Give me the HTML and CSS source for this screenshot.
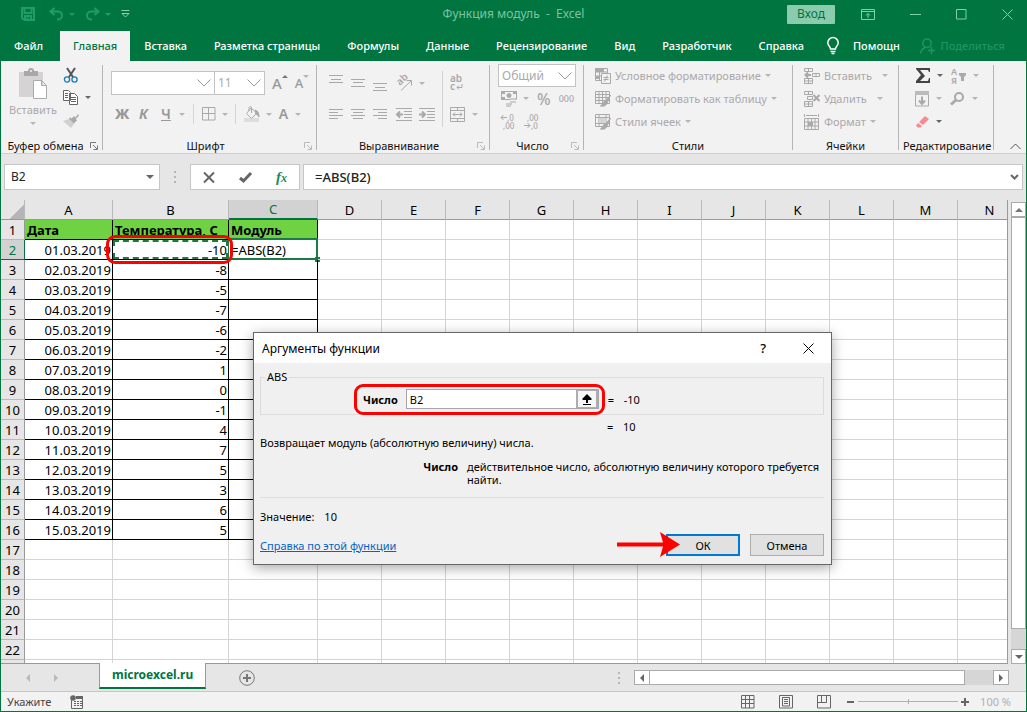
FILE: index.html
```html
<!DOCTYPE html>
<html lang="ru">
<head>
<meta charset="utf-8">
<title>Функция модуль - Excel</title>
<link rel="stylesheet" href="styles.css">
</head>
<body>
<div class="app">
  <header class="titlebar">
    <div class="quick">
      <button class="qbtn save" aria-label="Сохранить"><svg width="14" height="14" viewBox="0 0 14 14"><path d="M1 1h12v12H3.500L1 11zM3.500 1v5h7V1M4 13V9h6v4M6.500 10.500v2.500" /></svg></button>
      <button class="qbtn" aria-label="Отменить"><svg width="15" height="14" viewBox="0 0 15 14"><path d="M5.500 1L1.500 4.500l4 3.500M2 4.500h7a4 4 0 0 1 0 8H8"/></svg><i class="dd"></i></button>
      <button class="qbtn" aria-label="Вернуть"><svg width="15" height="14" viewBox="0 0 15 14"><path d="M9.500 1l4 3.500-4 3.500M13 4.500H6a4 4 0 0 0 0 8h1"/></svg><i class="dd"></i></button>
      <button class="qbtn more" aria-label="Настройка панели"><svg width="9" height="8" viewBox="0 0 9 8"><path d="M.5.5h8M1 3.500h7L4.500 7z"/></svg></button>
    </div>
    <div class="doc-title">Функция модуль &nbsp;- &nbsp;Excel</div>
    <div class="window-controls">
      <button class="login">Вход</button>
      <button class="wbtn" aria-label="Параметры ленты"><svg width="14" height="11" viewBox="0 0 14 11"><path d="M.5.5h13v10H.5zM.5 2.500h13M7 9V4.500M5 6.500l2-2 2 2"/></svg></button>
      <button class="wbtn" aria-label="Свернуть"><svg width="11" height="11" viewBox="0 0 11 11"><path d="M0 5.500h11"/></svg></button>
      <button class="wbtn" aria-label="Развернуть"><svg width="11" height="11" viewBox="0 0 11 11"><path d="M.5.5h9.500v9.500H.5z"/></svg></button>
      <button class="wbtn" aria-label="Закрыть"><svg width="11" height="11" viewBox="0 0 11 11"><path d="M.5.5l10 10M10.500.5l-10 10"/></svg></button>
    </div>
  </header>

  <nav class="tabs">
    <button class="tab file">Файл</button>
    <button class="tab active">Главная</button>
    <button class="tab">Вставка</button>
    <button class="tab">Разметка страницы</button>
    <button class="tab">Формулы</button>
    <button class="tab">Данные</button>
    <button class="tab">Рецензирование</button>
    <button class="tab">Вид</button>
    <button class="tab">Разработчик</button>
    <button class="tab">Справка</button>
    <button class="tab tell"><svg width="12" height="18" viewBox="0 0 12 18"><path d="M3.500 12c0-2.500-2.700-3-2.700-6.200a5.200 5.200 0 0 1 10.400 0C11.200 9 8.500 9.500 8.500 12zM3.500 14.500h5M4.500 16.500h3"/></svg>Помощн</button>
    <button class="tab share"><svg width="15" height="16" viewBox="0 0 15 16"><path d="M.7 15.500c0-3.500 2-5 4.500-6M7 1a4.200 4.200 0 1 1 0 8.400A4.200 4.200 0 0 1 7 1zM8 12.500h7M11.500 9v7"/></svg>Поделиться</button>
  </nav>

  <section class="ribbon">
    <div class="group clipboard">
      <div class="body">
        <button class="paste">
          <svg width="28" height="31" viewBox="0 0 28 31"><path fill="#d5d3d4" d="M0 4h24v25H0z"/><path fill="#a9a7a8" d="M5 3h4a3 3 0 0 1 6 0h4v5H5z"/><circle cx="12" cy="3" r="1" fill="#f3f2f3"/><path fill="#fff" stroke="#aaa" d="M14.500 12.500h8l5 5v13h-13zM22.500 12.500v5h5"/></svg>
          <span>Вставить</span><i class="dd"></i>
        </button>
        <div class="stack">
          <button class="ib" aria-label="Вырезать"><svg width="16" height="16" viewBox="0 0 16 16"><path stroke="#555" stroke-width="2" d="M4 1l6 9M12 1L6 10"/><circle cx="4" cy="12.500" r="2.600" stroke="#1b79b8" stroke-width="1.300"/><circle cx="11.500" cy="12.500" r="2.600" stroke="#1b79b8" stroke-width="1.300"/></svg></button>
          <button class="ib" aria-label="Копировать"><svg width="16" height="15" viewBox="0 0 16 15"><path fill="#fff" stroke="#666" d="M.5.5h5l2 2v8h-7zM6.500 3.500h5l3 3v8h-8z"/><path stroke="#1b79b8" d="M2 3.500h3M2 5.500h3M2 7.500h3M8 7.500h5M8 9.500h5M8 11.500h5"/></svg><i class="dd dark"></i></button>
          <button class="ib" aria-label="Формат по образцу"><svg width="16" height="15" viewBox="0 0 16 15"><path fill="#aaa" stroke="none" d="M8 6l3-3 1.500 1.500L15 1l1 1.500-3 3.500 1 1.500-2.500 2z"/><path fill="#d0d0d0" stroke="none" d="M0 8l6-2 5 5-3 4z"/><path stroke="#aaa" stroke-width="2" d="M6.500 5l5 5"/></svg></button>
        </div>
      </div>
      <div class="caption"><span>Буфер обмена</span><svg class="launch dark" width="8" height="8" viewBox="0 0 8 8"><path d="M.5 6V.5H6M3 3l4 4M7.500 3.500v4h-4"/></svg></div>
    </div>

    <div class="group font">
      <div class="body rows">
        <div class="row top">
          <label class="combo family"><select aria-label="Шрифт"><option></option></select><svg width="14" height="8" viewBox="0 0 14 8"><path d="M.5.5L7 7 13.500.5"/></svg></label>
          <label class="combo size"><select aria-label="Размер"><option>11</option></select><svg width="14" height="8" viewBox="0 0 14 8"><path d="M.5.5L7 7 13.500.5"/></svg></label>
          <button class="ib grow">A<i class="up"></i></button>
          <button class="ib shrink">A<i class="dd"></i></button>
        </div>
        <div class="row bottom">
          <button class="ib letter bold">Ж</button>
          <button class="ib letter ital">К</button>
          <button class="ib letter under"><u>Ч</u><i class="dd"></i></button>
          <i class="vline"></i>
          <button class="ib" aria-label="Границы"><svg width="14" height="14" viewBox="0 0 14 14"><path d="M.5.5h12.500v12.500H.5zM6.500.5V13M.5 6.500H13"/></svg><i class="dd"></i></button>
          <i class="vline"></i>
          <button class="ib" aria-label="Цвет заливки"><svg width="16" height="16" viewBox="0 0 16 16"><path fill="#dedddd" stroke="none" d="M0 12h15v4H0z"/><path fill="#f3f2f3" d="M7 2l6 5-5.500 5.500-5-5z"/><path d="M5 5V1.500c0-1 2.500-1 2.500 0V7"/><path fill="#aaa" d="M11 4c3 1 4 3 4 7-1-2-2-2-3-3z"/></svg><i class="dd"></i></button>
          <button class="ib letter color">А<i class="dd"></i></button>
        </div>
      </div>
      <div class="caption"><span>Шрифт</span><svg class="launch" width="8" height="8" viewBox="0 0 8 8"><path d="M.5 6V.5H6M3 3l4 4M7.500 3.500v4h-4"/></svg></div>
    </div>

    <div class="group align">
      <div class="body">
        <div class="rows">
          <div class="row top">
            <button class="ib" aria-label="По верхнему краю"><svg width="15" height="16" viewBox="0 0 15 16"><path d="M0 .5h14M2 4.500h10M0 7.500h14"/></svg></button>
            <button class="ib" aria-label="По середине"><svg width="15" height="16" viewBox="0 0 15 16"><path d="M0 4.500h14M2 7.500h10M0 11.500h14"/></svg></button>
            <button class="ib" aria-label="По нижнему краю"><svg width="15" height="16" viewBox="0 0 15 16"><path d="M0 8.500h14M2 12.500h10M0 15.500h14"/></svg></button>
            <button class="ib wide" aria-label="Ориентация"><svg width="17" height="16" viewBox="0 0 17 16"><text x="0" y="0" transform="translate(4 11) rotate(-45)">ab</text><path d="M5 15.500L15 6M10.500 5.500H15.500v5"/></svg><i class="dd"></i></button>
          </div>
          <div class="row bottom">
            <button class="ib" aria-label="По левому краю"><svg width="15" height="10" viewBox="0 0 15 10"><path d="M0 .5h14M0 3.500h9M0 6.500h14M0 9.500h9"/></svg></button>
            <button class="ib" aria-label="По центру"><svg width="15" height="10" viewBox="0 0 15 10"><path d="M0 .5h14M2 3.500h10M0 6.500h14M2 9.500h10"/></svg></button>
            <button class="ib" aria-label="По правому краю"><svg width="15" height="10" viewBox="0 0 15 10"><path d="M0 .5h14M5 3.500h9M0 6.500h14M5 9.500h9"/></svg></button>
            <button class="ib wide" aria-label="Уменьшить отступ"><svg width="16" height="13" viewBox="0 0 16 13"><path d="M0 .5h16M8 3.500h8M8 6.500h8M8 9.500h8M0 12.500h16"/><path class="thick" d="M1 6.500h6M4 3.500l-3 3 3 3"/></svg></button>
            <button class="ib" aria-label="Увеличить отступ"><svg width="16" height="13" viewBox="0 0 16 13"><path d="M0 .5h16M8 3.500h8M8 6.500h8M8 9.500h8M0 12.500h16"/><path class="thick" d="M0 6.500h6M3 3.500l3 3-3 3"/></svg></button>
          </div>
        </div>
        <i class="vline tall"></i>
        <div class="rows">
          <div class="row top"><button class="ib" aria-label="Перенести текст"><svg width="14" height="18" viewBox="0 0 14 18"><text x="0" y="8">ab</text><text x="0" y="16">c</text><path d="M12 10v3.500H7M9 11.500l-2 2 2 2"/></svg></button></div>
          <div class="row bottom"><button class="ib merge" aria-label="Объединить"><svg width="15" height="15" viewBox="0 0 15 15"><path d="M.5.5h14v14H.5zM.5 3.500h14M.5 11.500h14M7.500.5v3M7.500 11.500v3M3 7.500h9M5 5.500l-2 2 2 2M10 5.500l2 2-2 2"/></svg><i class="dd"></i></button></div>
        </div>
      </div>
      <div class="caption"><span>Выравнивание</span><svg class="launch" width="8" height="8" viewBox="0 0 8 8"><path d="M.5 6V.5H6M3 3l4 4M7.500 3.500v4h-4"/></svg></div>
    </div>

    <div class="group number">
      <div class="body stackrows">
        <label class="combo format"><select aria-label="Числовой формат"><option>Общий</option></select><svg width="14" height="8" viewBox="0 0 14 8"><path d="M.5.5L7 7 13.500.5"/></svg></label>
        <div class="row">
          <button class="ib money" aria-label="Денежный формат"><svg width="16" height="16" viewBox="0 0 16 16"><path d="M.5.5h15v8H.5z"/><path fill="#aaa" stroke="none" d="M0 0h4v3H0zM12 0h4v3h-4zM0 6h4v3H0z"/><circle cx="8" cy="4.500" r="2" fill="#aaa"/><path stroke="#ccc" stroke-width="2" d="M9 8h6M9 11h6M5 13h6M5 15h5"/></svg><i class="dd"></i></button>
          <button class="ib pct">%</button>
          <button class="ib zeros">000</button>
        </div>
        <div class="row dec">
          <button class="ib" aria-label="Увеличить разрядность"><svg width="15" height="16" viewBox="0 0 15 16"><text class="num" x="6" y="7">,0</text><text class="num" x="2" y="15">,00</text><path d="M0 3.500h6M2.500 1L0 3.500 2.500 6"/></svg></button>
          <button class="ib" aria-label="Уменьшить разрядность"><svg width="15" height="16" viewBox="0 0 15 16"><text class="num" x="3" y="7">,00</text><text class="num" x="7" y="15">,0</text><path d="M0 11.500h6M3.500 9L6 11.500 3.500 14"/></svg></button>
        </div>
      </div>
      <div class="caption"><span>Число</span><svg class="launch" width="8" height="8" viewBox="0 0 8 8"><path d="M.5 6V.5H6M3 3l4 4M7.500 3.500v4h-4"/></svg></div>
    </div>

    <div class="group styles">
      <div class="body stackrows">
        <button class="ib text"><svg width="16" height="16" viewBox="0 0 16 16"><path d="M.5.5h12v12H.5zM.5 4h12M.5 8h6M4.500.5v12"/><path fill="#aaa" stroke="none" d="M0 0h9v4H0zM0 8h5v3H0z"/><path fill="#f3f2f3" d="M6.500 5.500h9v10h-9z"/><path d="M8.500 9.500h5M8.500 11.500h5M12.500 7.500l-3 6"/></svg>Условное форматирование<i class="dd"></i></button>
        <button class="ib text"><svg width="16" height="16" viewBox="0 0 16 16"><path d="M.5.5h14v12H.5zM.5 3.500h14M.5 6.500h14M.5 9.500h14M4 .5v12M7.500.5v12M11 .5v12"/><path fill="#aaa" d="M15.500 4l-5 6-2 1c-1 1-1 3-3 4 3 .5 5 0 6-2z"/></svg>Форматировать как таблицу<i class="dd"></i></button>
        <button class="ib text"><svg width="16" height="16" viewBox="0 0 16 16"><path d="M.5.5h14v12H.5zM.5 3.500h14M.5 9.500h14M4 .5v12M11 .5v12"/><path fill="#d5d5d5" stroke="none" d="M4 4h7v5H4z"/><path fill="#aaa" d="M15.500 4l-5 6-2 1c-1 1-1 3-3 4 3 .5 5 0 6-2z"/></svg>Стили ячеек<i class="dd"></i></button>
      </div>
      <div class="caption"><span>Стили</span></div>
    </div>

    <div class="group cells">
      <div class="body stackrows">
        <button class="ib text ins"><svg width="16" height="16" viewBox="0 0 16 16"><path d="M.5.5h8v3h-8zM4.500.5v3M.5 10.500h8v5h-8zM4.500 10v5M.5 13h8M8.500 5.500h7v3h-7zM12 5.500v3"/><path class="thick" d="M1 7h6M4 4.500L1.500 7 4 9.500"/></svg>Вставить<i class="dd"></i></button>
        <button class="ib text del"><svg width="16" height="16" viewBox="0 0 16 16"><path d="M.5.5h8v3h-8zM4.500.5v3M.5 10.500h8v5h-8zM4.500 10v5M.5 13h8M3.500 5.500h5v3h-5z"/><path class="thick" d="M9.500 4l6 6M15.500 4l-6 6"/></svg>Удалить<i class="dd"></i></button>
        <button class="ib text"><svg width="16" height="16" viewBox="0 0 16 16"><path d="M.5 4.500h14v11H.5zM.5 8h14M.5 12h14M4 4.500v11M7.500 4.500v11M11 4.500v11M.5 0v3M14.500 0v3M2 1.500h11"/><path fill="#aaa" stroke="none" d="M4 8h5v4H4z"/></svg>Формат<i class="dd"></i></button>
      </div>
      <div class="caption"><span>Ячейки</span></div>
    </div>

    <div class="group edit">
      <div class="body stackrows">
        <div class="row"><button class="ib" aria-label="Автосумма"><svg width="16" height="16" viewBox="0 0 16 16"><path fill="#444" stroke="none" d="M1 0h14v4h-1l-1-2H5l5 6-5 5h8l1-3h1v5H1v-2l5-6-5-6z"/></svg><i class="dd dark"></i></button>
        <button class="ib" aria-label="Сортировка"><svg width="16" height="16" viewBox="0 0 16 16"><text class="tiny" x="0" y="7">А</text><text class="tiny" x="0" y="16">Я</text><path fill="#aaa" stroke="none" d="M8 5h7v2l-2 2v4h-3V9L8 7z"/></svg><i class="dd"></i></button></div>
        <div class="row"><button class="ib" aria-label="Заполнить"><svg width="15" height="16" viewBox="0 0 15 16"><path d="M.5.5h13v14.500H.5zM.5 3.500h13"/><path fill="#bbb" stroke="none" d="M0 0h14v4H0z"/><path class="thick" d="M7 5.500v7M4 9.500l3 3.500 3-3.500"/></svg><i class="dd"></i></button>
        <button class="ib" aria-label="Найти"><svg width="16" height="16" viewBox="0 0 16 16"><circle class="thick" cx="9" cy="6" r="4"/><path stroke-width="3" d="M6 9L1 13.500"/></svg><i class="dd"></i></button></div>
        <div class="row"><button class="ib" aria-label="Очистить"><svg width="15" height="14" viewBox="0 0 15 14"><path fill="#f78b90" stroke="none" d="M4 7l6-6 4 3-6 6zM3 8l4 3-1.500 1.500h-3L1 10.500z"/></svg><i class="dd dark"></i></button></div>
      </div>
      <div class="caption"><span>Редактирование</span></div>
    </div>
    <button class="collapse" aria-label="Свернуть ленту"><svg width="11" height="7" viewBox="0 0 11 7"><path d="M.5 6l5-5 5 5"/></svg></button>
  </section>

  <section class="formula-bar">
    <div class="name-box"><input aria-label="Имя" value="B2"><i class="dd dark"></i></div>
    <i class="grip"></i>
    <div class="fx">
      <button aria-label="Отмена"><svg width="12" height="11" viewBox="0 0 12 11"><path stroke="#666" stroke-width="2" d="M1 .5l10 10M11 .5l-10 10"/></svg></button>
      <button aria-label="Ввод"><svg width="13" height="11" viewBox="0 0 13 11"><path fill="none" stroke="#666" stroke-width="3" d="M1 6l3.500 3L12 1"/></svg></button>
      <button class="fn" aria-label="Вставить функцию">f<small>x</small></button>
    </div>
    <div class="formula"><input aria-label="Строка формул" value="=ABS(B2)"><svg width="9" height="7" viewBox="0 0 9 7"><path fill="none" stroke="#666" stroke-width="2" d="M1 1l3.500 3.500L8 1"/></svg></div>
  </section>

  <main class="work">
    <div class="sheet"><table id="grid"></table></div>
    <div class="vscroll">
      <button aria-label="Вверх"><i class="up"></i></button>
      <div class="thumb"></div><div class="track"></div>
      <button aria-label="Вниз"><i class="dd dark"></i></button>
    </div>
  </main>

  <section class="sheet-tabs">
    <div class="nav"><i class="left"></i><i class="right"></i></div>
    <button class="sheet-tab">microexcel.ru</button>
    <button class="add" aria-label="Новый лист"><svg width="16" height="16" viewBox="0 0 16 16"><circle cx="8" cy="8" r="7.300"/><path stroke-width="2" d="M4 8h8M8 4v8"/></svg></button>
    <i class="grip"></i>
    <div class="hscroll">
      <button aria-label="Влево"><i class="left"></i></button>
      <div class="thumb"></div><div class="track"></div>
      <button aria-label="Вправо"><i class="right"></i></button>
    </div>
  </section>

  <footer class="status">
    <span class="mode">Укажите</span>
    <svg width="14" height="14" viewBox="0 0 14 14"><path d="M1.500 5v8.500h11v-11H7"/><path fill="#666" stroke="none" d="M6 1h7v3H6z"/><circle cx="3" cy="3" r="2.800" fill="#666" stroke="none"/><path d="M4 6.500h2M7 6.500h2M10 6.500h2M4 8.500h2M7 8.500h2M10 8.500h2M4 10.500h2M7 10.500h2M10 10.500h2"/></svg>
    <div class="views">
      <button aria-label="Обычный"><svg width="14" height="14" viewBox="0 0 14 14"><path d="M.5.500h12.500v12.500H.5zM4.500.5V13M8.500.5V13M.5 4.500H13M.5 8.500H13"/></svg></button>
      <button aria-label="Разметка"><svg width="14" height="14" viewBox="0 0 14 14"><path d="M.5.500h13v12.500H.5zM3.500 2.500h7v8.500h-7zM5 4.500h4M5 6.500h4M5 8.500h4"/></svg></button>
      <button aria-label="Страничный"><svg width="14" height="14" viewBox="0 0 14 14"><path d="M.5.500h13v12.500H.5zM4.500.5v7h5v-7M.5 7.500h9"/></svg></button>
    </div>
    <div class="zoom">
      <button aria-label="Уменьшить"><svg width="7" height="8" viewBox="0 0 7 8"><path stroke-width="2" d="M0 4h7"/></svg></button>
      <input type="range" aria-label="Масштаб" min="0" max="100" value="50">
      <button aria-label="Увеличить"><svg width="8" height="8" viewBox="0 0 8 8"><path stroke-width="2" d="M0 4h8M4 0v8"/></svg></button>
      <span>100 %</span>
    </div>
  </footer>

  <div class="dialog" role="dialog" aria-labelledby="dlg-title">
    <div class="dlg-head">
      <span id="dlg-title">Аргументы функции</span>
      <button class="help">?</button>
      <button aria-label="Закрыть"><svg width="11" height="11" viewBox="0 0 11 11"><path d="M.5.5l10 10M10.500.5l-10 10" stroke="#000" fill="none"/></svg></button>
    </div>
    <div class="dlg-body">
      <fieldset>
        <legend>ABS</legend>
        <label for="arg">Число</label>
        <div class="ref"><input id="arg" value="B2"><button aria-label="Свернуть диалог"><svg width="10" height="11" viewBox="0 0 10 11"><path d="M5 0l4.500 4.500V6H6v3H4V6H.5V4.500zM1 10h8v1H1z"/></svg></button></div>
        <span class="eq">=</span><span>-10</span>
      </fieldset>
      <p class="result"><span class="eq">=</span><span>10</span></p>
      <p class="about">Возвращает модуль (абсолютную величину) числа.</p>
      <div class="arg-help"><b>Число</b><span>действительное число, абсолютную величину которого требуется найти.</span></div>
      <p class="value"><span>Значение:</span><span>10</span></p>
      <div class="dlg-foot"><a href="#">Справка по этой функции</a><button class="ok">ОК</button><button>Отмена</button></div>
    </div>
    <i class="ring arg-ring"></i>
    <svg class="arrow" width="64" height="25" viewBox="0 0 64 25"><path fill="#f00" d="M0 10.500h46L43 0l20 12.500L43 25l3-10.500H0z"/></svg>
  </div>
</div>
<script src="grid.js"></script>
</body>
</html>
```
FILE: grid.js
```js
const letters = "ABCDEFGHIJKLMN".split("");
const values = [-10, -8, -5, -7, -6, -2, 1, 0, -1, 4, 7, 5, 3, 6, 5];
const heads = { A: "Дата", B: "Температура, С", C: "Модуль" };

function content(row, col) {
  if (row === 1) return heads[col] || "";
  if (row > 16) return "";
  if (col === "A") return String(row - 1).padStart(2, "0") + ".03.2019";
  if (col === "B") return String(values[row - 2]);
  if (col === "C" && row === 2) return "=ABS(B2)";
  return "";
}

const cols = letters.map(l => `<col class="col-${"ABC".includes(l) ? l.toLowerCase() : "std"}">`).join("");
let html = `<colgroup><col class="col-num">${cols}</colgroup><thead><tr><th class="corner"></th>`;
html += letters.map(l => `<th scope="col"${l === "C" ? ' class="sel"' : ""}>${l}</th>`).join("") + "</tr></thead><tbody>";
for (let r = 1; r <= 23; r++) {
  html += `<tr><th scope="row"${r === 2 ? ' class="sel"' : ""}>${r < 23 ? r : ""}</th>`;
  for (const l of letters) {
    const cls = [];
    if ("ABC".includes(l) && r <= 16) cls.push(r === 1 ? "head" : "data");
    let extra = "";
    if (r === 2 && l === "B") extra = '<i class="ants"></i><i class="ring cell-ring"></i>';
    if (r === 2 && l === "C") { cls.push("cur"); extra = '<i class="cursor"></i>'; }
    html += `<td class="${cls.join(" ")}">${content(r, l)}${extra}</td>`;
  }
  html += "</tr>";
}
document.getElementById("grid").innerHTML = html + "</tbody>";
```
FILE: styles.css
```css
* { box-sizing: border-box; }
html, body { height: 100%; }
body { margin: 0; font: 12px/16px "Noto Sans", "Open Sans", sans-serif; color: #222; }
button { font: inherit; color: inherit; background: none; border: 0; padding: 0; }
input, select { font: inherit; color: inherit; border: 0; padding: 0; margin: 0; background: none; min-width: 0; outline: 0; }
svg { display: block; flex: none; overflow: visible; }
i { display: block; flex: none; font-style: normal; }
p { margin: 0; }

.app { position: relative; display: flex; flex-direction: column; height: 100vh; border: 1px solid #007540; border-top: 0; background: #e6e6e6; overflow: hidden; }

.dd { width: 0; border: 3px solid transparent; border-top-color: #b5b5b5; border-bottom: 0; }
.dd.dark { border-top-color: #666; }
.up { width: 0; border: 4px solid transparent; border-bottom-color: #777; border-top: 0; }
.left { width: 0; border: 4px solid transparent; border-right-color: #666; border-left: 0; }
.right { width: 0; border: 4px solid transparent; border-left-color: #666; border-right: 0; }

/* Title bar */
.titlebar { display: grid; grid-template-columns: 1fr auto 1fr; align-items: center; height: 31px; flex: none; background: #007540; color: #7cc4a0; padding-bottom: 3px; }
.quick { display: flex; align-items: center; padding-left: 20px; }
.qbtn { display: flex; align-items: center; gap: 5px; margin-right: 10px; }
.qbtn.save { margin-right: 14px; }
.qbtn svg { fill: none; stroke: #1f9c68; stroke-width: 2; }
.qbtn .dd { border-top-color: #1f9c68; }
.qbtn.more svg { stroke: #8ed0b2; stroke-width: 1; }
.window-controls { display: flex; justify-content: flex-end; align-items: center; padding-right: 13px; gap: 35px; }
.login { width: 48px; height: 19px; margin-right: -9px; background: #8bccae; color: #007540; border-radius: 1px; }
.wbtn svg { fill: none; stroke: #7fd0ac; }

/* Ribbon tabs */
.tabs { display: flex; background: #007540; color: #fff; height: 30px; flex: none; font-size: 11px; font-weight: 500; }
.tab { padding: 0 14px 0 13px; white-space: nowrap; }
.tab.file { padding: 0 17px 0 13px; }
.tab.active { background: #f3f2f3; color: #007540; padding: 0 13px; margin-right: 1px; }
.tab.tell, .tab.share { display: flex; align-items: center; gap: 14px; }
.tab.tell { padding: 0 0 0 9px; }
.tab.share { gap: 6px; margin-left: auto; padding: 0 21px 0 0; color: #1f9562; }
.tab svg { fill: none; stroke: currentColor; stroke-width: 1.5; }

/* Ribbon */
.ribbon { position: relative; display: flex; height: 93px; flex: none; background: #f3f2f3; border-bottom: 1px solid #cfcfcf; padding-top: 4px; color: #aaa8a9; font-size: 11px; }
.group { display: flex; flex-direction: column; height: 85px; border-right: 1px solid #b5b5b5; }
.group .body { display: flex; flex: 1; min-height: 0; }
.caption { display: flex; align-items: center; flex: none; height: 16px; margin-bottom: -4px; padding: 0 4px; color: #111; }
.caption span { flex: 1; text-align: center; white-space: nowrap; }
.launch { fill: none; stroke: #bbb; }
.launch.dark { stroke: #777; }
.ib svg { fill: none; stroke: #aaa8a9; }
.ib svg .thick { stroke-width: 2; }
.ib svg text { fill: #aaa8a9; stroke: none; font-size: 10px; font-weight: 600; }
.ib svg text.num { font-size: 8px; font-weight: 500; }
.ib svg text.tiny { font-size: 9px; }
.ib { display: flex; align-items: center; gap: 6px; white-space: nowrap; }
.row { display: flex; align-items: center; }
.rows { display: flex; flex-direction: column; }
.group .body.rows { flex-direction: column; }
.vline { width: 1px; height: 20px; background: #d4d4d4; }
.vline.tall { height: 56px; margin: 6px 7px 0; }

.clipboard { width: 102px; }
.clipboard .caption { padding: 0 4px 0 0; }
.paste { display: flex; flex-direction: column; align-items: center; width: 48px; margin: 3px 0 0 8px; height: 62px; }
.paste span { margin: 3px 0 4px; }
.stack { display: flex; flex-direction: column; padding-left: 6px; margin-top: -2px; }
.stack .ib { height: 23px; gap: 6px; }

.font { width: 214px; }
.combo { display: grid; align-items: center; background: #fff; border: 1px solid #c3c3c3; height: 24px; font-size: 12px; }
.combo select { grid-area: 1 / 1; appearance: none; padding-left: 3px; width: 100%; color: #aaa; }
.combo svg { grid-area: 1 / 1; justify-self: end; margin-right: 3px; fill: none; stroke: #999; pointer-events: none; }
.family { width: 104px; }
.size { width: 51px; margin-left: -1px; }
.font .top { margin: 6px 0 0 8px; height: 24px; }
.grow, .shrink { gap: 0; align-items: flex-start; font-weight: 500; color: #999; }
.grow { font-size: 15px; margin-left: 7px; }
.shrink { font-size: 13px; margin-left: 7px; }
.grow .up { border-width: 0 3px 3px; }
.font .bottom { margin: 8px 0 0 12px; height: 22px; }
.letter { font-size: 14px; font-weight: 600; color: #999; }
.bold { width: 24px; font-weight: 800; }
.ital { width: 22px; font-style: italic; font-weight: 700; }
.under { gap: 8px; margin-right: 8px; }
.font .bottom .vline + .ib { margin: 0 7px 0 8px; gap: 6px; }
.font .bottom .color { gap: 7px; }

.align { width: 173px; }
.align .top, .align .bottom { gap: 7px; margin-left: 12px; }
.align .top { height: 16px; margin-top: 10px; }
.align .bottom { height: 16px; margin-top: 15px; }
.align .ib.wide { margin-left: 1px; }
.align .vline ~ .rows .row { margin-left: 0; }
.merge { gap: 7px; }

.number { width: 94px; }
.group .body.stackrows { flex-direction: column; margin-top: -1px; }
.stackrows .row, .stackrows .ib.text { height: 23px; flex: none; }
.number .combo { width: 78px; height: 23px; margin-left: 8px; }
.number .row { margin-left: 11px; gap: 8px; }
.pct { font-size: 16px; font-weight: 500; }
.zeros { font-size: 9px; font-weight: 500; }

.styles { width: 209px; }
.stackrows .ib.text { margin-left: 11px; gap: 4px; }
.ins .dd { margin-left: 6px; }
.del .dd { margin-left: 6px; }
.cells { width: 106px; }
.edit { width: 95px; }
.edit .row { margin-left: 16px; gap: 8px; }
.collapse { position: absolute; right: 5px; bottom: 3px; }
.collapse svg { fill: none; stroke: #555; }

/* Formula bar */
.formula-bar { display: flex; align-items: center; height: 46px; flex: none; padding: 0 3px; }
.name-box, .fx, .formula { display: flex; align-items: center; height: 26px; background: #fff; border: 1px solid #c6c6c6; }
.name-box { width: 156px; padding: 0 5px 0 6px; }
.name-box input, .formula input { flex: 1; }
.name-box .dd { border-width: 4px 4px 0; }
.grip { width: 2px; height: 12px; margin: 0 14px; background: repeating-linear-gradient(#b5b5b5 0 2px, transparent 2px 5px); }
.fx { width: 110px; justify-content: space-between; padding: 0 12px; }
.fn { font: italic 700 15px/16px "Liberation Serif", serif; color: #1f8a5b; }
.fn small { font-size: 12px; }
.formula { flex: 1; margin-left: 3px; padding: 0 3px 0 11px; font-size: 13px; font-weight: 500; }

/* Sheet */
.work { flex: 1; display: flex; min-height: 0; }
.sheet { flex: 1; min-width: 0; overflow: hidden; background: #fff; border-right: 1px solid #999; border-bottom: 1px solid #999; }
#grid { border-collapse: separate; border-spacing: 0; table-layout: fixed; width: 1021px; font-size: 13px; line-height: 18px; color: #000; }
.col-num { width: 24px; }
.col-a { width: 88px; }
.col-b { width: 116px; }
.col-c { width: 89px; }
.col-std { width: 64px; }
#grid th { background: #e6e6e6; font-weight: 400; padding: 0; height: 20px; border-right: 1px solid #b9b9b9; border-bottom: 1px solid #b9b9b9; }
#grid thead th { border-bottom-color: #999; }
#grid tbody th { border-right-color: #999; }
#grid .corner { background: linear-gradient(135deg, transparent 65%, #b5b5b5 65%) #e6e6e6; }
#grid th.sel { background: #d2d2d2; color: #007540; border-color: #007540; }
#grid thead th.sel { border-right-color: #b9b9b9; border-bottom-width: 2px; line-height: 17px; }
#grid td { height: 20px; padding: 0; border-right: 1px solid #d4d4d4; border-bottom: 1px solid #d4d4d4; position: relative; white-space: nowrap; }
#grid td.head { background: #6fd242; font-weight: 700; padding-left: 2px; border-color: #000; }
#grid td.data { text-align: right; border-color: #000; padding-right: 1px; }
#grid td.cur { text-align: left; padding-left: 2px; }
.ants { position: absolute; inset: 0; border: 2px dashed #1d7a47; }
.ring { position: absolute; border: 3px solid #f00; border-radius: 9px; z-index: 2; pointer-events: none; }
.cell-ring { inset: -5px -5px -5px -7px; }
.cursor { position: absolute; inset: -2px -1px -1px; border: 2px solid #1d7a47; border-left-width: 1px; }
.cursor::after { content: ""; position: absolute; right: -4px; bottom: -4px; width: 5px; height: 5px; background: #1d7a47; }

.vscroll { width: 18px; display: flex; flex-direction: column; padding: 2px 0 0 3px; }
.vscroll button { height: 15px; display: grid; place-items: center; background: #fff; border: 1px solid #ababab; }
.vscroll .thumb { flex: 411; background: #fff; border: 1px solid #ababab; }
.vscroll .track { flex: 20; background: #d6d6d6; }
.vscroll .dd { border-width: 4px 4px 0; }

/* Sheet tabs */
.sheet-tabs { display: flex; align-items: center; height: 28px; flex: none; border-bottom: 1px solid #c6c6c6; }
.nav { display: flex; gap: 24px; width: 98px; padding-left: 25px; }
.nav .left { border-right-color: #b9b9b9; }
.nav .right { border-left-color: #b9b9b9; }
.sheet-tab { align-self: flex-start; height: 26px; margin-top: -1px; background: #fff; color: #007540; font-size: 12px; font-weight: 700; padding: 0 12px; border: 1px solid #999; border-top: 0; border-bottom: 2px solid #007540; }
.add { margin: 0 auto 0 33px; }
.add svg { fill: none; stroke: #777; }
.hscroll { display: flex; width: 375px; height: 15px; margin-right: 17px; }
.hscroll button { width: 16px; display: grid; place-items: center; background: #fff; border: 1px solid #ababab; }
.hscroll .thumb { flex: 317; background: #fff; border: 1px solid #ababab; border-left-width: 0; }
.hscroll .track { flex: 28; background: #d6d6d6; }

/* Status bar */
.status { display: flex; align-items: center; height: 19px; flex: none; background: #f3f2f3; font-size: 11px; padding: 0 15px 0 6px; color: #444; }
.status svg { fill: none; stroke: #666; }
.mode { margin-right: 19px; }
.views { display: flex; gap: 24px; margin: 0 16px 0 auto; }
.zoom { display: flex; align-items: center; gap: 3px; }
.zoom input { appearance: none; width: 100px; height: 8px; margin: 0 0 0 1px; background: linear-gradient(#b0b0b0, #b0b0b0) center / 100% 1px no-repeat; }
.zoom input::-webkit-slider-thumb { appearance: none; width: 1px; height: 5px; background: #b0b0b0; }
.zoom span { margin-left: 8px; color: #b0b0b0; }

/* Function arguments dialog */
.dialog { position: absolute; left: 252px; top: 332px; width: 579px; background: #f0f0f0; border: 1px solid #666; box-shadow: 0 3px 12px rgba(0, 0, 0, .35); font-size: 11px; line-height: 13px; color: #000; z-index: 5; }
.dlg-head { display: flex; align-items: center; height: 30px; background: #fff; padding: 0 17px 0 8px; font-size: 12px; gap: 37px; }
.dlg-head span { flex: 1; }
.help { font-size: 13px; font-weight: 500; }
.dlg-body { padding: 8px 7px 0 6px; }
fieldset { display: flex; align-items: center; margin: 0; padding: 1px 0 0 102px; border: 1px solid #dcdcdc; height: 44px; min-width: 0; }
legend { margin-left: -98px; padding: 0 2px; height: 12px; line-height: 12px; }
fieldset label, .arg-help b { font-weight: 700; }
.ref { display: flex; width: 193px; height: 20px; margin: 0 9px 0 8px; border: 1px solid #a5a5ad; background: #fff; }
.ref input { flex: 1; padding-left: 3px; }
.ref button { width: 22px; display: grid; place-items: center; border: 1px solid #adadad; border-width: 1px 2px; background: #f6f6f6; }
.eq { width: 16px; }
.result { display: flex; padding-left: 347px; margin-top: 5px; }
.about { margin-top: 3px; }
.arg-help { display: grid; grid-template-columns: 198px 1fr; gap: 9px; margin-top: 11px; padding-bottom: 11px; border-bottom: 1px solid #dcdcdc; }
.arg-help b { text-align: right; }
.value { display: flex; gap: 10px; margin-top: 12px; }
.dlg-foot { display: flex; align-items: center; gap: 10px; margin: 11px 0 8px; }
.dlg-foot a { margin-right: auto; color: #0563c1; }
.dlg-foot button { width: 74px; height: 22px; background: #e1e1e1; border: 1px solid #adadad; }
.dlg-foot .ok { border: 2px solid #0078d7; }
.arg-ring { left: 100px; top: 51px; width: 251px; height: 31px; }
.arrow { position: absolute; right: 150px; bottom: 7px; }
```
